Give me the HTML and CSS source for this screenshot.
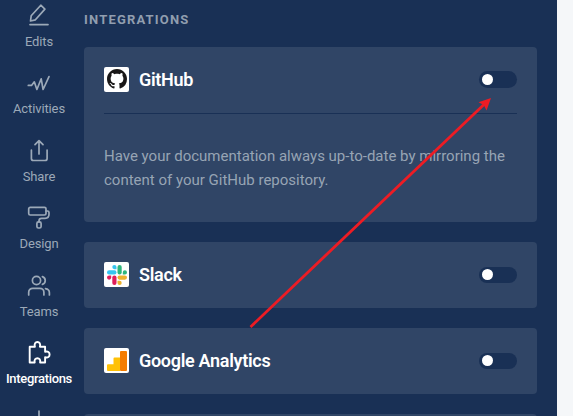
FILE: index.html
```html
<!DOCTYPE html>
<html lang="en">
<head>
<meta charset="utf-8">
<title>Integrations</title>
<link rel="stylesheet" href="styles.css">
</head>
<body>
<div class="app">
  <nav class="sidebar">
    <a class="item"><svg viewBox="0 0 24 24"><path d="M3.500 18l.7-5.200L13.800 2.200l4.100 3.900L8.400 16.800zM3 21.600h18"/></svg><span>Edits</span></a>
    <a class="item"><svg viewBox="0 0 24 24"><path d="M1.300 14.400h3.200l2.800-3.600 2.600 7.700 4.300-10.700 1.900 10.700L22 5.600"/></svg><span>Activities</span></a>
    <a class="item"><svg viewBox="0 0 24 24"><path d="M12 16V2.800M8 6.600l4-4 4 4M4.400 12v8.500a2 2 0 0 0 2 2h11.700a2 2 0 0 0 2-2V12"/></svg><span>Share</span></a>
    <a class="item"><svg viewBox="0 0 24 24"><rect x="1.700" y="2.300" width="17.300" height="7.700" rx="1.500"/><path d="M19 6h1.500a1.500 1.500 0 0 1 1.500 1.500v1.800c0 3-1.500 4-4 4h-3.500a2.500 2.500 0 0 0-2.500 2.500v1"/><rect x="9.900" y="16.800" width="4.200" height="6.200" rx="1.600"/></svg><span>Design</span></a>
    <a class="item"><svg viewBox="0 0 24 24"><circle cx="9.500" cy="7.500" r="4.100"/><path d="M1.700 22v-2.700a4 4 0 0 1 4-4h7.200a4 4 0 0 1 4 4V22M15.400 3.600a4.100 4.100 0 0 1 0 7.800M18.500 15.600c2.500.4 3.900 2 3.900 4.200V22"/></svg><span>Teams</span></a>
    <a class="item active"><svg viewBox="0 0 24 24"><path d="M2.700 6.700h5.200c-.9-3.200.5-4.700 2.500-4.700s3.400 1.500 2.500 4.700h5.200v5.100c2.900-.8 4.500.6 4.500 2.700s-1.600 3.500-4.500 2.700v5.300h-5c.6-2.800-.7-4.300-2.700-4.300s-3.300 1.500-2.700 4.300h-5z"/></svg><span>Integrations</span></a>
    <a class="item"><svg viewBox="0 0 24 24"><path d="M12 3v18M3 12h18"/></svg></a>
  </nav>
  <main class="panel">
    <h1>INTEGRATIONS</h1>
    <section class="card">
      <header>
        <span class="logo"><svg viewBox="0 0 16 16"><path fill="#191717" d="M8 0C3.580 0 0 3.580 0 8c0 3.540 2.290 6.530 5.470 7.590.4.070.55-.17.55-.38 0-.19-.01-.82-.01-1.490-2.010.37-2.530-.49-2.690-.94-.09-.23-.48-.94-.82-1.130-.28-.15-.68-.52-.01-.53.63-.01 1.080.58 1.230.82.72 1.210 1.870.87 2.330.66.070-.52.28-.87.51-1.070-1.780-.2-3.640-.89-3.640-3.950 0-.87.31-1.590.82-2.150-.08-.2-.36-1.020.08-2.120 0 0 .67-.21 2.200.82.64-.18 1.320-.27 2-.27s1.360.09 2 .27c1.530-1.040 2.200-.82 2.200-.82.44 1.100.16 1.920.08 2.120.51.56.82 1.270.82 2.150 0 3.070-1.870 3.750-3.650 3.950.29.25.54.73.54 1.480 0 1.070-.01 1.930-.01 2.200 0 .21.15.46.55.38A8.010 8.010 0 0 0 16 8c0-4.420-3.580-8-8-8z"/></svg></span>
        <h2>GitHub</h2><span class="toggle tall"></span>
      </header>
      <p>Have your documentation always up-to-date by mirroring the content of your GitHub repository.</p>
    </section>
    <section class="card">
      <header>
        <span class="logo"><svg viewBox="0 0 20 20"><g fill="#36c5f0"><rect y="5.300" width="9.500" height="4.200" rx="2.100"/><path d="M9.500 4.200H7.400a2.100 2.100 0 1 1 2.100-2.100z"/></g><g fill="#2eb67d"><rect x="10.500" width="4.200" height="9.500" rx="2.100"/><path d="M15.800 9.500V7.400a2.100 2.100 0 1 1 2.100 2.100z"/></g><g fill="#ecb22e"><rect x="10.500" y="10.500" width="9.500" height="4.200" rx="2.100"/><path d="M10.500 15.800h2.100a2.100 2.100 0 1 1-2.100 2.100z"/></g><g fill="#e01e5a"><rect x="5.300" y="10.500" width="4.200" height="9.500" rx="2.100"/><path d="M4.200 10.500v2.100a2.100 2.100 0 1 1-2.100-2.100z"/></g></svg></span>
        <h2>Slack</h2><span class="toggle"></span>
      </header>
    </section>
    <section class="card">
      <header>
        <span class="logo"><svg viewBox="0 0 20 20"><path fill="#ffc107" d="M1 13.300h5.500V7.500a1 1 0 0 1 1-1H13V20H1a1 1 0 0 1-1-1v-4.700a1 1 0 0 1 1-1z"/><rect x="13" width="7" height="20" rx="1" fill="#f57c00"/></svg></span>
        <h2>Google Analytics</h2><span class="toggle"></span>
      </header>
    </section>
    <section class="card"><header></header></section>
  </main>
</div>
<svg class="arrow" viewBox="0 0 573 416"><path d="M250.500 327L484 104.500" fill="none" stroke="#ed1c24" stroke-width="2.800"/><path d="M491 98l-4.500 12.500-2.700-5.500-5.300-2.700z" fill="#ed1c24"/></svg>
</body>
</html>
```
FILE: styles.css
```css
* { box-sizing: border-box; }
body {
  margin: 0;
  height: 416px;
  overflow: hidden;
  background: #f5f7f9;
  font-family: Roboto, sans-serif;
}
.app {
  display: flex;
  width: 557px;
  height: 416px;
  overflow: hidden;
  background: #193055;
}
.sidebar {
  width: 84px;
  flex: none;
  padding: 3.2px 6px 0 0;
}
.item {
  display: flex;
  flex-direction: column;
  align-items: center;
  gap: 6.8px;
  height: 67.4px;
  color: #9ca9b8;
  font-size: 13px;
  line-height: 16px;
  letter-spacing: -0.12px;
}
.item svg {
  flex: none;
  width: 24px;
  height: 24px;
  fill: none;
  stroke: currentColor;
  stroke-width: 1.7;
  stroke-linejoin: round;
  stroke-linecap: round;
}
.active {
  color: #fff;
  font-weight: 500;
  letter-spacing: -0.33px;
}
.active svg { stroke-width: 1.9; }
.panel {
  width: 453px;
  flex: none;
  padding-top: 12px;
}
h1 {
  margin: 0 0 19px;
  color: #919eaf;
  font-size: 13px;
  font-weight: 700;
  line-height: 16px;
  letter-spacing: 1.18px;
}
.card {
  min-height: 66px;
  margin-bottom: 20px;
  padding: 0 20px;
  border-radius: 4px;
  background: #304566;
}
header {
  display: flex;
  align-items: center;
  height: 66px;
}
.card:first-of-type { height: 175px; }
.card:first-of-type header {
  height: 67px;
  padding-bottom: 1px;
  border-bottom: 1px solid #193055;
}
.logo {
  display: flex;
  align-items: center;
  justify-content: center;
  width: 25px;
  height: 25px;
  margin-bottom: 1px;
  border-radius: 2px;
  background: #fff;
}
.logo svg { width: 20px; height: 20px; }
h2 {
  flex: 1;
  margin: 0 0 0 10px;
  color: #fff;
  font-size: 18px;
  font-weight: 600;
  line-height: 24px;
  letter-spacing: -0.3px;
}
.toggle {
  width: 38px;
  height: 16px;
  padding: 2px 3px;
  border-radius: 9px;
  background: #193055;
}
.toggle.tall { height: 17px; padding-top: 3px; }
.toggle::before {
  content: "";
  display: block;
  width: 11px;
  height: 11px;
  border-radius: 50%;
  background: #fff;
}
p {
  margin: 30px 0 0;
  color: #97a4b4;
  font-size: 15px;
  line-height: 24px;
}
.arrow {
  position: absolute;
  top: 0;
  left: 0;
  width: 573px;
  height: 416px;
}
```
